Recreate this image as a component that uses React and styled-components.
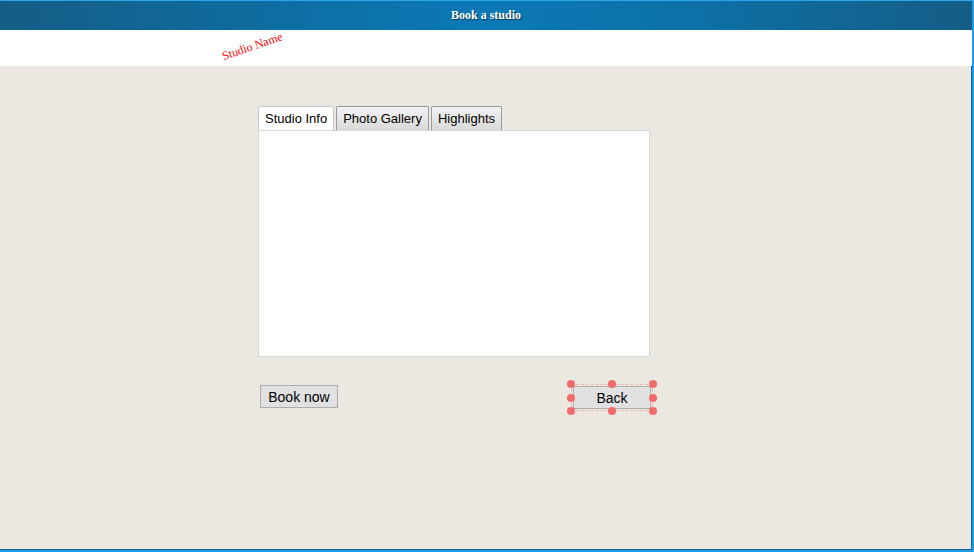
import React, { useState } from 'react';
import styled, { createGlobalStyle } from 'styled-components';

const GlobalStyle = createGlobalStyle`
  html, body {
    margin: 0;
    padding: 0;
    background: #ebe8e2;
  }
  body {
    font-family: "Liberation Sans", Arial, sans-serif;
  }
`;

const Frame = styled.div`
  width: 974px;
  height: 552px;
  box-sizing: border-box;
  display: flex;
  flex-direction: column;
  background: #ebe8e2;
  border-top: 1px solid #2aa6ec;
  border-right: 2px solid #1c9be4;
  border-bottom: 2px solid #1c9be4;
  box-shadow: inset -1px -1px 0 #0d5f96;
  overflow: hidden;
`;

const TitleBar = styled.div`
  height: 29px;
  flex-shrink: 0;
  display: flex;
  align-items: center;
  justify-content: center;
  background: linear-gradient(90deg, #155d86 0%, #0d71a8 35%, #0b79b6 50%, #0d71a8 70%, #155d86 100%);
  color: #fff;
  font-family: "Liberation Serif", "Times New Roman", serif;
  font-weight: bold;
  font-size: 12px;
  text-shadow: 1px 1px 1px #0a3550;
`;

const NameBar = styled.div`
  height: 36px;
  flex-shrink: 0;
  background: #fff;
  position: relative;
`;

const StudioName = styled.span`
  position: absolute;
  left: 225px;
  top: 19px;
  color: #ff0000;
  font-family: "Liberation Serif", "Times New Roman", serif;
  font-size: 12px;
  transform: rotate(-19deg);
  transform-origin: left bottom;
  white-space: nowrap;
`;

const Content = styled.div`
  flex: 1;
  padding: 40px 0 0 258px;
  display: flex;
  flex-direction: column;
`;

const Tabs = styled.div`
  display: flex;
  gap: 2px;
  height: 24px;
`;

const Tab = styled.button`
  box-sizing: border-box;
  height: 24px;
  padding: 0 6px;
  font-family: "Liberation Sans", Arial, sans-serif;
  font-size: 13px;
  color: #000;
  border: 1px solid ${p => (p.active ? '#c8c8c8' : '#9a9a9a')};
  border-bottom: none;
  border-radius: 2px 2px 0 0;
  background: ${p => (p.active ? '#fff' : 'linear-gradient(#f2f2f2, #d9d9d9)')};
  cursor: pointer;
`;

const Panel = styled.div`
  box-sizing: border-box;
  width: 392px;
  height: 227px;
  background: #fff;
  border: 1px solid #d6d6d6;
`;

const Actions = styled.div`
  display: flex;
  justify-content: space-between;
  align-items: flex-start;
  width: 395px;
  margin-top: 27px;
  padding-left: 2px;
  box-sizing: border-box;
`;

const Button = styled.button`
  box-sizing: border-box;
  width: 78px;
  height: 23px;
  padding: 0;
  margin-top: ${p => (p.offset ? '1px' : '0')};
  background: #e1e1e1;
  border: 1px solid #adadad;
  font-family: "Liberation Sans", Arial, sans-serif;
  font-size: 14px;
  color: #000;
  cursor: pointer;
  display: block;
`;

const Selected = styled.div`
  position: relative;
  padding: 2px;
  outline: 1px dashed rgba(240, 120, 120, 0.45);
  outline-offset: -1px;
`;

const Handle = styled.span`
  position: absolute;
  width: 8px;
  height: 8px;
  border-radius: 50%;
  background: #f26b6b;
  left: ${p => p.x};
  top: ${p => p.y};
  transform: translate(-50%, -50%);
`;

const handles = [
  ['0%', '0%'], ['50%', '0%'], ['100%', '0%'],
  ['0%', '50%'], ['100%', '50%'],
  ['0%', '100%'], ['50%', '100%'], ['100%', '100%'],
];

export default function App() {
  const [tab, setTab] = useState('info');

  return (
    <Frame>
      <GlobalStyle />
      <TitleBar>Book a studio</TitleBar>
      <NameBar>
        <StudioName>Studio Name</StudioName>
      </NameBar>
      <Content>
        <Tabs>
          <Tab active={tab === 'info'} onClick={() => setTab('info')}>Studio Info</Tab>
          <Tab active={tab === 'gallery'} onClick={() => setTab('gallery')}>Photo Gallery</Tab>
          <Tab active={tab === 'highlights'} onClick={() => setTab('highlights')}>Highlights</Tab>
        </Tabs>
        <Panel />
        <Actions>
          <Button offset>Book now</Button>
          <Selected>
            <Button>Back</Button>
            {handles.map(([x, y]) => (
              <Handle key={x + y} x={x} y={y} />
            ))}
          </Selected>
        </Actions>
      </Content>
    </Frame>
  );
}
